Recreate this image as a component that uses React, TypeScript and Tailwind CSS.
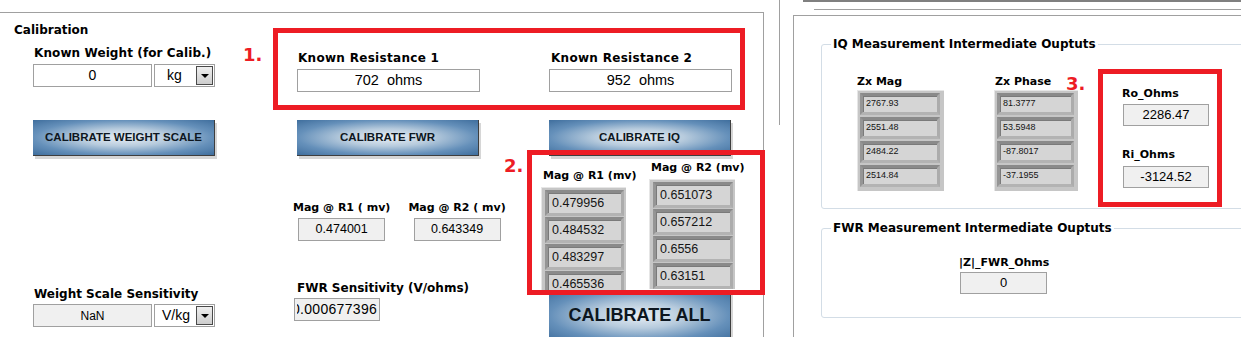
import React from "react";

const LABEL = "font-['DejaVu_Sans',sans-serif] font-bold text-[12px] leading-[14px] whitespace-nowrap";
const SMALL_LABEL = "font-['DejaVu_Sans',sans-serif] font-bold text-[11px] leading-[13px] whitespace-pre";
const VALUE = "font-['Liberation_Sans',Arial,sans-serif]";
const BTN =
  "flex items-center justify-center w-[182px] border-r border-b border-[#3e3e3e] shadow-[2px_3px_0_#d6d6d6] bg-[radial-gradient(ellipse_at_center,#e9eff5_0%,#b7cbdd_35%,#6590ba_70%,#3f6e9d_100%)] font-['Liberation_Sans',Arial,sans-serif] font-bold text-[#0d1620] whitespace-pre";
const RED = "absolute border-[5px] border-[#ed1c24] pointer-events-none";
const RED_NUM = "absolute font-['DejaVu_Sans',sans-serif] font-bold text-[18px] leading-[22px] text-[#ed1c24]";

function Ring({ value, pad }: { value: string; pad: string }) {
  return (
    <div className={`w-[61px] h-[23px] border border-[#a0a0a0] bg-white flex items-center pr-[1px] ${pad}`}>
      <span className={`flex-1 text-[14px] ${VALUE}`}>{value}</span>
      <div className="w-[17px] h-[19px] border border-[#4a4a4a] bg-[linear-gradient(#efefef,#cdcdcd)] flex items-center justify-center">
        <div className="w-0 h-0 border-l-[4px] border-r-[4px] border-t-[4px] border-l-transparent border-r-transparent border-t-black" />
      </div>
    </div>
  );
}

function ArrayBox({ values, big }: { values: string[]; big?: boolean }) {
  return (
    <div
      className={`bg-[#c6c6c6] shadow-[inset_1px_1px_0_#e6e6e6] flex flex-col ${
        big ? "pt-[3px] pl-[4px] pr-[2px] gap-[1px]" : "pt-[3px] pl-[3px] pr-[4px] pb-[4px] gap-[2px]"
      }`}
    >
      {values.map((v) => (
        <div
          key={v}
          className={`shrink-0 border-[3px] border-t-[#8a8a8a] border-l-[#959595] border-b-[#b3b3b3] border-r-[#acacac] bg-[#d5d5d5] shadow-[inset_1px_1px_0_#7a7a7a] flex items-center ${VALUE} text-[#141414] ${
            big ? "h-[26px] pl-[4px] text-[12.5px]" : "h-[22px] pl-[3px] text-[9px]"
          }`}
        >
          {v}
        </div>
      ))}
    </div>
  );
}

function Field({ value, width, grey, size }: { value: string; width: string; grey?: boolean; size: string }) {
  return (
    <div
      className={`h-[23px] border border-[#a0a0a0] flex items-center justify-center whitespace-pre ${VALUE} ${size} ${width} ${
        grey ? "bg-[#f0f0f0]" : "bg-white"
      }`}
    >
      {value}
    </div>
  );
}

function GroupBox({ title, className, children }: { title: string; className: string; children: React.ReactNode }) {
  return (
    <div className={`relative shrink-0 w-[460px] border border-[#d3dde6] rounded-[3px] ${className}`}>
      <span className={`absolute -top-[8px] left-[9px] bg-white px-[2px] ${LABEL}`}>{title}</span>
      {children}
    </div>
  );
}

export default function App() {
  return (
    <div className="relative w-[1241px] h-[337px] overflow-hidden bg-white text-black flex">
      {/* left pane */}
      <div className="w-[764px] shrink-0 flex flex-col">
        <div className="h-[2px] w-[755px] bg-[#808080]" />
        <div className="mt-[7px] h-px w-[762px] bg-[#a0a0a0]" />
        <div className="mt-[5px] flex-1 border-t border-r border-[#a0a0a0] pt-[10px]">
          <div className={`ml-[14px] ${LABEL}`}>Calibration</div>
          <div className="flex items-start">
            {/* column A */}
            <div className="ml-[33px] w-[182px] shrink-0 flex flex-col">
              <div className={`mt-[9px] ml-[1px] tracking-[0.1px] ${LABEL}`}>Known Weight (for Calib.)</div>
              <div className="mt-[4px] flex gap-[2px]">
                <Field value="0" width="w-[119px]" size="text-[14px]" />
                <Ring value="kg" pad="pl-[12px]" />
              </div>
              <div className={`mt-[33px] h-[36px] text-[11.5px] ${BTN}`}>CALIBRATE WEIGHT SCALE</div>
              <div className={`mt-[131px] ml-[1px] ${LABEL}`}>Weight Scale Sensitivity</div>
              <div className="mt-[3px] flex gap-[2px]">
                <Field value="NaN" width="w-[119px]" size="text-[12px]" grey />
                <Ring value="V/kg" pad="pl-[7px]" />
              </div>
            </div>

            {/* column B */}
            <div className="ml-[82px] w-[183px] shrink-0 flex flex-col">
              <div className={`mt-[14px] ml-[1px] tracking-[0.3px] ${LABEL}`}>Known Resistance 1</div>
              <div className="mt-[4px]">
                <Field value="702  ohms" width="w-[183px]" size="text-[14.5px]" />
              </div>
              <div className={`mt-[28px] h-[36px] text-[11.5px] ${BTN}`}>CALIBRATE FWR</div>
              <div className="mt-[45px] -ml-[4px] flex gap-[18px]">
                <div className="w-[98px] flex flex-col items-center">
                  <div className={SMALL_LABEL}>Mag @ R1 ( mv)</div>
                  <div className="mt-[4px]">
                    <Field value="0.474001" width="w-[87px]" size="text-[12.5px]" grey />
                  </div>
                </div>
                <div className="w-[98px] flex flex-col items-center">
                  <div className={SMALL_LABEL}>Mag @ R2 ( mv)</div>
                  <div className="mt-[4px]">
                    <Field value="0.643349" width="w-[87px]" size="text-[12.5px]" grey />
                  </div>
                </div>
              </div>
              <div className={`mt-[40px] ${LABEL}`}>FWR Sensitivity (V/ohms)</div>
              <div className="mt-[3px] -ml-[3px] w-[86px] h-[23px] border border-[#a0a0a0] bg-[#f0f0f0] flex items-center">
                <div className={`mx-[2px] flex-1 overflow-hidden ${VALUE} text-[14px] tracking-[0.3px]`}>
                  <span className="block -ml-[5px] whitespace-nowrap">0.000677396</span>
                </div>
              </div>
            </div>

            {/* column C */}
            <div className="ml-[69px] w-[183px] shrink-0 flex flex-col">
              <div className={`mt-[14px] ml-[2px] tracking-[0.3px] ${LABEL}`}>Known Resistance 2</div>
              <div className="mt-[4px]">
                <Field value="952  ohms" width="w-[183px]" size="text-[14.5px]" />
              </div>
              <div className={`mt-[28px] h-[36px] text-[11.5px] ${BTN}`}>CALIBRATE IQ</div>
              <div className="h-[134px] w-[212px] -ml-[8px] overflow-hidden flex items-start">
                <div className="w-[96px] shrink-0 mt-[13px] flex flex-col">
                  <div className={`ml-[2px] ${SMALL_LABEL}`}>Mag @ R1 (mv)</div>
                  <div className="mt-[5px] w-[85px]">
                    <ArrayBox big values={["0.479956", "0.484532", "0.483297", "0.465536"]} />
                  </div>
                </div>
                <div className="ml-[12px] shrink-0 mt-[5px] flex flex-col">
                  <div className={`ml-[2px] ${SMALL_LABEL}`}>Mag @ R2 (mv)</div>
                  <div className="mt-[5px] w-[86px]">
                    <ArrayBox big values={["0.651073", "0.657212", "0.6556", "0.63151"]} />
                  </div>
                </div>
              </div>
              <div className={`h-[52px] text-[18px] ${BTN}`}>CALIBRATE ALL</div>
            </div>
          </div>
        </div>
      </div>

      {/* splitter */}
      <div className="w-[29px] shrink-0">
        <div className="ml-[15px] w-px h-[125px] bg-[#a0a0a0]" />
      </div>

      {/* right pane */}
      <div className="flex-1 flex flex-col min-w-0">
        <div className="ml-[10px] h-[2px] bg-[#808080]" />
        <div className="mt-[7px] ml-[21px] h-px bg-[#a0a0a0]" />
        <div className="mt-[5px] flex-1 border-t border-l border-[#a0a0a0] flex flex-col">
          <GroupBox title="IQ Measurement Intermediate Ouptuts" className="ml-[27px] mt-[28px] h-[165px]">
            <div className="flex items-start">
              <div className="ml-[35px] mt-[30px] w-[87px] flex flex-col">
                <div className={SMALL_LABEL}>Zx Mag</div>
                <div className="mt-[2px]">
                  <ArrayBox values={["2767.93", "2551.48", "2484.22", "2514.84"]} />
                </div>
              </div>
              <div className="ml-[50px] mt-[30px] w-[84px] flex flex-col">
                <div className={`ml-[1px] ${SMALL_LABEL}`}>Zx Phase</div>
                <div className="mt-[2px]">
                  <ArrayBox values={["81.3777", "53.5948", "-87.8017", "-37.1955"]} />
                </div>
              </div>
              <div className="ml-[44px] mt-[42px] flex flex-col">
                <div className={SMALL_LABEL}>Ro_Ohms</div>
                <div className={`mt-[4px] ml-[1px] w-[86px] h-[22px] border border-[#a0a0a0] bg-[#f0f0f0] flex items-center justify-center ${VALUE} text-[13px]`}>
                  2286.47
                </div>
                <div className={`mt-[22px] ${SMALL_LABEL}`}>Ri_Ohms</div>
                <div className={`mt-[5px] ml-[1px] w-[86px] h-[22px] border border-[#a0a0a0] bg-[#f0f0f0] flex items-center justify-center ${VALUE} text-[13px]`}>
                  -3124.52
                </div>
              </div>
            </div>
          </GroupBox>

          <GroupBox title="FWR Measurement Intermediate Ouptuts" className="ml-[27px] mt-[19px] h-[90px]">
            <div className="ml-[137px] mt-[27px] w-[90px] flex flex-col">
              <div className={SMALL_LABEL}>|Z|_FWR_Ohms</div>
              <div className={`mt-[3px] ml-[1px] w-[87px] h-[22px] border border-[#a0a0a0] bg-[#f0f0f0] flex items-center justify-center ${VALUE} text-[13px]`}>
                0
              </div>
            </div>
          </GroupBox>
        </div>
      </div>

      {/* annotation overlays */}
      <div className={`${RED} left-[273px] top-[28px] w-[472px] h-[82px]`} />
      <div className={`${RED} left-[527px] top-[150px] w-[238px] h-[145px]`} />
      <div className={`${RED} left-[1098px] top-[69px] w-[124px] h-[138px]`} />
      <span className={`${RED_NUM} left-[243px] top-[44px]`}>1.</span>
      <span className={`${RED_NUM} left-[504px] top-[155px]`}>2.</span>
      <span className={`${RED_NUM} left-[1066px] top-[73px]`}>3.</span>
    </div>
  );
}
